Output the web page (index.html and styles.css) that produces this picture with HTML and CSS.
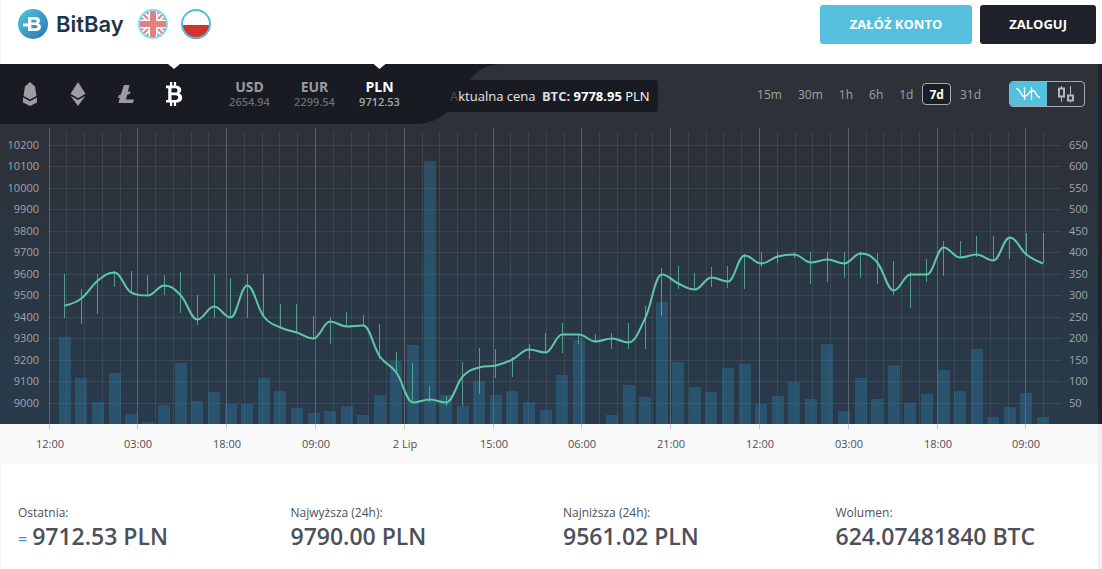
FILE: index.html
```html
<!DOCTYPE html>
<html lang="pl">
<head>
<meta charset="utf-8">
<title>BitBay</title>
<link rel="stylesheet" href="styles.css">
</head>
<body>
<header class="header">
  <a class="brand" href="#" aria-label="BitBay">
    <svg class="brand-mark" viewBox="0 0 30 30" aria-hidden="true">
      <defs><linearGradient id="mark" x1="0" y1="0" x2="1" y2="1"><stop offset="0" stop-color="#52c7de"/><stop offset="1" stop-color="#2b74b0"/></linearGradient></defs>
      <circle cx="15" cy="15" r="15" fill="url(#mark)"/>
      <path fill="#fff" fill-rule="evenodd" d="M10 8h7.300c3.200 0 4.700 1.400 4.700 3.600 0 1.400-.6 2.400-1.700 3 1.700.5 2.600 1.700 2.600 3.400 0 2.700-2 4.100-5.200 4.100H10v-4.500H5v-3h5zM13.300 10.700v2.700h3.500c1.200 0 1.800-.5 1.800-1.400s-.6-1.300-1.800-1.300zM13.300 16.100v3.200h4c1.400 0 2.100-.5 2.100-1.600s-.7-1.600-2.100-1.600z"/>
    </svg>
    <span class="brand-name">BitBay</span>
  </a>
  <nav class="languages" aria-label="Język">
    <a class="flag flag-muted" href="#" aria-label="English">
      <svg viewBox="0 0 30 30" aria-hidden="true">
        <defs><clipPath id="disc"><circle cx="15" cy="15" r="14"/></clipPath></defs>
        <g clip-path="url(#disc)">
          <path fill="#3444a8" d="M0 0h30v30H0z"/>
          <path stroke="#fff" stroke-width="6" d="M0 0l30 30M30 0L0 30"/>
          <path stroke="#cf2e2b" stroke-width="2" d="M0 0l30 30M30 0L0 30"/>
          <path stroke="#fff" stroke-width="9" d="M15 0v30M0 15h30"/>
          <path stroke="#cf2e2b" stroke-width="6" d="M15 0v30M0 15h30"/>
        </g>
        <circle cx="15" cy="15" r="14" fill="none" stroke="#3fbcd8" stroke-width="2"/>
      </svg>
    </a>
    <a class="flag" href="#" aria-label="Polski">
      <svg viewBox="0 0 30 30" aria-hidden="true">
        <circle cx="15" cy="15" r="14" fill="#fff"/>
        <path fill="#cf352c" d="M1 16h28a14 14 0 0 1-28 0z"/>
        <circle cx="15" cy="15" r="14" fill="none" stroke="#50bfdc" stroke-width="2"/>
      </svg>
    </a>
  </nav>
  <div class="account">
    <button class="btn btn-primary" type="button">ZAŁÓŻ KONTO</button>
    <button class="btn btn-dark" type="button">ZALOGUJ</button>
  </div>
</header>

<main class="page">
  <section class="market">
    <div class="toolbar">
      <div class="selector">
        <svg class="selector-shape" viewBox="0 0 500 60" aria-hidden="true"><path fill="#181b22" d="M0 0h500C480 1 471 13 464 26C450 50 436 60 414 60H0z"/></svg>
        <div class="coins">
          <button class="coin" type="button" aria-label="Lisk"><svg viewBox="0 0 24 26" aria-hidden="true"><path d="M12 1l5 4.500 1.500 9.500L12 18.500 5.500 15 7 5.500zM5 16.500l2.500 1.200 4.500 2.600 4.500-2.600 2.500-1.200v5L12 25l-7-3.500z"/></svg></button>
          <button class="coin" type="button" aria-label="Ethereum"><svg viewBox="0 0 24 26" aria-hidden="true"><path d="M12 1l7.500 11.700L12 17.300l-7.500-4.600zM4.500 14.700l7.500 4.400 7.500-4.400L12 25z"/></svg></button>
          <button class="coin" type="button" aria-label="Litecoin"><svg viewBox="0 0 24 26" aria-hidden="true"><path d="M10 4h5.500l-1.700 7 2.700-1-.6 2.800-2.800 1.100-1.200 4.600H20L18.800 22H4.500l1.500-5.600-2 .8.700-2.900 2.100-.8z"/></svg></button>
          <button class="coin is-active" type="button" aria-label="Bitcoin"><svg viewBox="0 0 24 26" aria-hidden="true"><path fill-rule="evenodd" d="M4 4.500h4V1h2.200v3.500h1.700V1h2.200v3.600c3.500.4 5.100 1.900 5.100 4.400 0 1.700-.8 2.800-2.200 3.500 2.100.6 3.200 2 3.200 4.200 0 3-2.200 4.700-6.100 4.900V25h-2.200v-3.400h-1.700V25H8v-3.400H4V19h2.200V7.200H4zM9.500 7.300v4.300h3.300c1.800 0 2.700-.7 2.700-2.200s-.9-2.100-2.700-2.100zM9.500 14.200v4.700h3.700c2 0 3-.8 3-2.400s-1-2.300-3-2.300z"/></svg></button>
        </div>
        <div class="fiats">
          <button class="fiat" type="button"><strong>USD</strong><span>2654.94</span></button>
          <button class="fiat" type="button"><strong>EUR</strong><span>2299.54</span></button>
          <button class="fiat is-active" type="button"><strong>PLN</strong><span>9712.53</span></button>
        </div>
      </div>
      <p class="ticker"><span class="ticker-label"><span class="ticker-fade">A</span>ktualna cena</span> <b class="ticker-coin">BTC:</b> <b>9778.95</b> PLN</p>
      <div class="ranges">
        <button class="range" type="button">15m</button>
        <button class="range" type="button">30m</button>
        <button class="range" type="button">1h</button>
        <button class="range" type="button">6h</button>
        <button class="range" type="button">1d</button>
        <button class="range is-active" type="button">7d</button>
        <button class="range" type="button">31d</button>
      </div>
      <div class="modes">
        <button class="mode is-active" type="button" aria-label="Wykres liniowy"><svg viewBox="0 0 24 16" aria-hidden="true"><path stroke-width="1.3" d="M0 2.500c5 0 4 8 8.500 8s4-6 8-6 3 7 7.500 7M8.500 1v13M15.500 1v13"/></svg></button>
        <button class="mode" type="button" aria-label="Wykres świecowy"><svg viewBox="0 0 24 16" aria-hidden="true"><path stroke-width="1" d="M8.500 0v3M8.500 10v6M17.500 0v9M17.500 14.500v2"/><path stroke-width="2" d="M6 2.500h5v8H6zM15 9.500h5v5h-5z"/></svg></button>
      </div>
    </div>
    <svg class="chart" id="chart" viewBox="0 0 1098 340" role="img" aria-label="Kurs BTC/PLN"></svg>
  </section>

  <section class="stats">
    <div class="stat"><h2>Ostatnia:</h2><p><span class="trend">=</span>9712.53 PLN</p></div>
    <div class="stat"><h2>Najwyższa (24h):</h2><p>9790.00 PLN</p></div>
    <div class="stat"><h2>Najniższa (24h):</h2><p>9561.02 PLN</p></div>
    <div class="stat"><h2>Wolumen:</h2><p>624.07481840 BTC</p></div>
  </section>
</main>
<script src="chart.js"></script>
</body>
</html>
```
FILE: styles.css
```css
* { box-sizing: border-box; }

body {
  margin: 0;
  background: #fff;
  color: #4d5059;
  font-family: "Open Sans", "Noto Sans", sans-serif;
  font-size: 12px;
}

button {
  margin: 0;
  padding: 0;
  border: 0;
  background: none;
  color: inherit;
  font: inherit;
  cursor: pointer;
}

.header {
  display: flex;
  align-items: center;
  height: 64px;
  padding: 0 6px 16px 17px;
  border-left: 1px solid #f3f3f4;
}

.brand {
  display: flex;
  align-items: center;
  gap: 8px;
  color: #1d3548;
  text-decoration: none;
}

.brand-mark { width: 30px; height: 30px; }

.brand-name {
  font-family: Inter, sans-serif;
  font-size: 22px;
  font-weight: 600;
}

.languages { display: flex; gap: 13px; margin-left: 14px; }
.flag, .flag svg { display: block; width: 30px; height: 30px; }
.flag-muted { opacity: 0.6; }

.account { display: flex; gap: 8px; margin-left: auto; }

.btn {
  height: 39px;
  padding: 0 30px;
  border-radius: 3px;
  color: #fff;
  font-size: 13px;
  font-weight: 700;
}

.btn-primary { background: #55c0dd; }
.btn-dark { padding: 0 29px; background: #1e2129; }

.page {
  padding-right: 4px;
  background: #eeeff1;
}

.market {
  background: linear-gradient(#2e3138 0, #2d313a 100px, #2a3642 190px, #293a4b 360px);
  box-shadow: 4px 0 #1d242d;
}

.toolbar {
  position: relative;
  display: flex;
  align-items: center;
  height: 60px;
  padding-right: 13px;
}

.selector {
  position: relative;
  display: flex;
  align-items: center;
  flex: none;
  width: 500px;
  height: 60px;
  padding-left: 6px;
}

.selector-shape { position: absolute; inset: 0; }

.coins, .fiats { position: relative; display: flex; height: 60px; }
.fiats { margin-left: 19px; }

.coin {
  position: relative;
  width: 48px;
  height: 60px;
  fill: #9c9da0;
}

.coin svg { display: block; width: 24px; height: 26px; margin: 0 auto; }
.coin.is-active { fill: #fff; }

.is-active.coin::after,
.is-active.fiat::after {
  content: "";
  position: absolute;
  top: 0;
  left: 50%;
  width: 12px;
  height: 5px;
  margin-left: -6px;
  background: #fff;
  clip-path: polygon(0 0, 100% 0, 50% 100%);
}

.fiat {
  position: relative;
  width: 65px;
  color: #6a6c71;
  font-size: 11px;
  font-weight: 600;
  line-height: 15px;
}

.fiat strong, .fiat span { display: block; }
.fiat strong { color: #9b9c9f; font-size: 14px; font-weight: 700; }
.fiat.is-active { color: #a8a9ac; }
.fiat.is-active strong { color: #fff; }

.ticker {
  position: absolute;
  top: 16px;
  left: 442px;
  margin: 0;
  padding: 0 8px;
  border-radius: 3px;
  background: #181b22;
  color: #fff;
  font-size: 13px;
  line-height: 32px;
  white-space: nowrap;
}

.ticker-label { margin-right: 3px; color: #e6e7e9; }
.ticker-fade { color: #4a4d53; }
.ticker-coin { color: #dddee0; }

.ranges { display: flex; gap: 2px; margin-left: auto; }

.range {
  height: 22px;
  padding: 0 6px;
  border: 1px solid transparent;
  border-radius: 4px;
  color: #a0a2a6;
  font-size: 12px;
}

.range.is-active {
  border-color: #a9abb0;
  background: #1b1e26;
  color: #fff;
  font-weight: 700;
}

.modes {
  display: flex;
  width: 76px;
  height: 26px;
  margin-left: 21px;
  overflow: hidden;
  border: 1px solid #a9abb0;
  border-radius: 4px;
}

.mode {
  display: flex;
  flex: 1;
  align-items: center;
  justify-content: center;
  stroke: #b5b6b9;
}

.mode svg { width: 24px; height: 16px; fill: none; overflow: visible; }
.mode.is-active { margin: -1px 0 -1px -1px; background: #55c0dd; stroke: #fff; }

.chart { display: block; width: 100%; height: auto; overflow: visible; }
.time-band { fill: #f9f9f9; }
.time-edge { fill: #eeeff1; }
.grid-minor { stroke: #fff; stroke-opacity: 0.08; }
.grid-major { stroke: #fff; stroke-opacity: 0.22; }
.tick { stroke: #c6c8ce; }
.volume { fill: #2a7aa6; fill-opacity: 0.4; }
.wick { stroke: #5fcbaa; stroke-opacity: 0.7; }
.price { fill: none; stroke: #5dc9a8; stroke-width: 2; stroke-linejoin: round; }
.axis-label { fill: #9fa5ad; font-size: 11px; }
.axis-end { text-anchor: end; }
.time-label { fill: #4b4e55; font-size: 11px; text-anchor: middle; }

.stats {
  display: grid;
  grid-template-columns: repeat(4, 1fr);
  padding: 40px 4px 16px 3px;
  border-left: 1px solid #f3f3f4;
  background: #fff;
}

.stat { padding-left: 14px; }
.stat h2 { margin: 0; font-size: 12px; font-weight: 400; line-height: 17px; }

.stat p {
  margin: 0;
  color: #4d505b;
  font-size: 23px;
  font-weight: 600;
  line-height: 31px;
  white-space: nowrap;
}

.trend { margin-right: 5px; color: #3f93c4; font-size: 16px; }
```
FILE: chart.js
```js
// Each row: close, high, low and volume-bar top, as heights on the plot.
const points = [
  [181,150,194,213],[174,165,200,254],[156,150,190,278],[148,147,163,249],[168,147,168,290],[171,151,172,298],
  [161,151,171,281],[171,148,189,239],[195,171,201,277],[182,150,194,268],[193,154,193,280],[161,150,194,280],
  [192,150,193,254],[203,180,204,267],[208,180,209,284],[214,192,214,289],[197,193,220,287],[202,188,202,282],
  [201,191,202,291],[232,200,235,271],[248,228,250,237],[278,239,279,221],[275,262,278,37],[278,272,282,271],
  [252,238,282,282],[243,224,270,257],[241,225,254,271],[235,233,253,267],[225,220,235,278],[228,209,228,286],
  [210,199,229,251],[210,210,220,216],[217,210,217,300],[214,209,225,291],[218,199,225,261],[194,182,225,273],
  [150,144,192,178],[159,142,165,238],[165,149,165,263],[153,143,163,268],[157,142,164,244],[131,130,165,240],
  [139,128,143,280],[132,128,139,272],[130,128,134,258],[138,128,160,275],[135,128,158,220],[139,128,154,287],
  [129,128,154,254],[138,129,160,275],[166,137,171,241],[150,148,184,279],[150,135,158,270],[123,117,152,246],
  [133,117,133,267],[130,112,133,225],[136,112,136,293],[113,113,135,283],[130,109,130,269],[139,109,139,293]
];
const baseline = 300;
const chart = document.getElementById("chart");

function draw(tag, className, attributes, text) {
  const node = document.createElementNS("http://www.w3.org/2000/svg", tag);
  node.setAttribute("class", className);
  for (const name in attributes) node.setAttribute(name, attributes[name]);
  if (text !== undefined) node.textContent = text;
  chart.appendChild(node);
}

const crisp = value => Math.floor(value) + 0.5;
const line = (className, x1, y1, x2, y2) => draw("line", className, { x1, y1, x2, y2 });

draw("rect", "time-band", { x: 0, y: baseline, width: 1098, height: 40 });
draw("rect", "time-edge", { x: 1098, y: baseline, width: 4, height: 40 });

// Price scale on the left, volume scale on the right.
for (let i = 0; i < 13; i++) {
  const y = crisp(21.3 + i * 21.5);
  line("grid-minor", 47, y, 1061, y);
  draw("text", "axis-label axis-end", { x: 39, y: Math.floor(y) + 4 }, 10200 - i * 100);
  draw("text", "axis-label", { x: 1069, y: Math.floor(y) + 4 }, 650 - i * 50);
}

// Time scale: one labelled line for every five.
const times = ["12:00", "03:00", "18:00", "09:00", "2 Lip", "15:00", "06:00", "21:00", "12:00", "03:00", "18:00", "09:00"];
for (let i = 0; i < 57; i++) {
  const x = crisp(49.1 + i * 17.76);
  const major = i % 5 === 0;
  line(major ? "grid-major" : "grid-minor", x, major ? 4 : 8, x, baseline);
  if (major) {
    line("tick", x, baseline, x, baseline + 5);
    draw("text", "time-label", { x: Math.ceil(x), y: 324 }, times[i / 5]);
  }
}

const series = points.map((p, i) => ({ x: 64.8 + i * 16.58, y: p[0] + 0.5, high: p[1], low: p[2], top: p[3] }));

series.forEach(p => {
  draw("rect", "volume", { x: Math.round(p.x) - 6, y: p.top, width: 12, height: baseline - p.top });
});
series.forEach(p => line("wick", crisp(p.x), p.high, crisp(p.x), p.low));

// Smooth line whose control points never pass the neighbouring values.
function controls(prev, p, next) {
  const lx = (1.5 * p.x + prev.x) / 2.5;
  const rx = (1.5 * p.x + next.x) / 2.5;
  let ly = (1.5 * p.y + prev.y) / 2.5;
  let ry = (1.5 * p.y + next.y) / 2.5;
  const shift = (ry - ly) * (rx - p.x) / (rx - lx) + p.y - ry;
  ly += shift;
  ry += shift;
  const clamp = (value, other) => Math.min(Math.max(value, Math.min(other, p.y)), Math.max(other, p.y));
  const l = clamp(ly, prev.y);
  if (l !== ly) { ly = l; ry = 2 * p.y - ly; }
  const r = clamp(ry, next.y);
  if (r !== ry) { ry = r; ly = 2 * p.y - ry; }
  return { lx, ly, rx, ry };
}

let path = `M${series[0].x} ${series[0].y}`;
let out = { rx: series[0].x, ry: series[0].y };
for (let i = 1; i < series.length; i++) {
  const p = series[i];
  const c = i < series.length - 1 ? controls(series[i - 1], p, series[i + 1]) : { lx: p.x, ly: p.y };
  path += `C${out.rx} ${out.ry} ${c.lx} ${c.ly} ${p.x} ${p.y}`;
  out = c;
}
draw("path", "price", { d: path });
```
